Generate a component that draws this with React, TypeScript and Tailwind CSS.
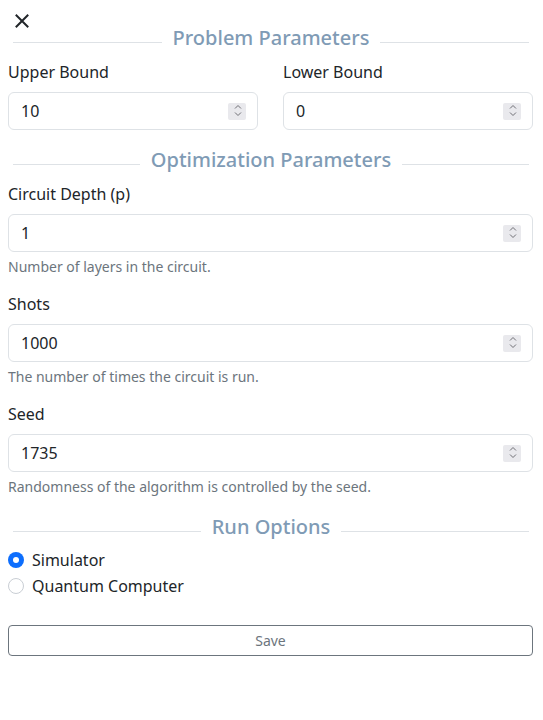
import React from "react";

function SectionTitle({ title, className = "" }: { title: string; className?: string }) {
  return (
    <div className={`flex items-center gap-[11px] pl-[5px] pr-[4px] ${className}`}>
      <div className="h-px flex-1 bg-[#dee2e6] mt-[8px]" />
      <h5 className="text-[20px] leading-[30px] font-medium text-[#809bb5]">{title}</h5>
      <div className="h-px flex-1 bg-[#dee2e6] mt-[8px]" />
    </div>
  );
}

function Spinner() {
  return (
    <span className="flex h-[17px] w-[18px] items-center justify-center bg-[#e9e9ed] rounded-[2px]">
      <svg width="18" height="17" viewBox="0 0 18 17" fill="none" stroke="#6f6f75" strokeWidth="1">
        <path d="M7 5.5 L10 2.5 L13 5.5" />
        <path d="M7 9.5 L10 12.5 L13 9.5" />
      </svg>
    </span>
  );
}

function NumberField({ value }: { value: string }) {
  return (
    <div className="flex h-[38px] items-center rounded-[6px] border border-[#dee2e6] bg-white pl-[12px] pr-[11px]">
      <input
        type="text"
        defaultValue={value}
        className="min-w-0 flex-1 bg-transparent text-[16px] leading-6 text-[#212529] outline-none"
      />
      <Spinner />
    </div>
  );
}

function Field({ label, value, help }: { label: string; value: string; help?: string }) {
  return (
    <div>
      <label className="mb-2 block text-[16px] leading-6 text-[#212529]">{label}</label>
      <NumberField value={value} />
      {help && <div className="mt-1 text-[14px] leading-[21px] text-[#6c757d]">{help}</div>}
    </div>
  );
}

function Radio({ label, checked }: { label: string; checked?: boolean }) {
  return (
    <label className="flex items-center gap-2 text-[16px] leading-6 text-[#212529]">
      {checked ? (
        <span className="flex h-4 w-4 items-center justify-center rounded-full bg-[#0d6efd]">
          <span className="h-[6px] w-[6px] rounded-full bg-white" />
        </span>
      ) : (
        <span className="h-4 w-4 rounded-full border border-[#c9ced4] bg-white" />
      )}
      {label}
    </label>
  );
}

export default function App() {
  return (
    <div className="min-h-[720px] bg-white pl-2 pr-[10px] font-['Noto_Sans',sans-serif]">
      <div className="h-[23px] pl-[7px] pt-[14px]">
        <button className="block">
          <svg width="14" height="14" viewBox="0 0 14 14" stroke="#212529" strokeWidth="2" strokeLinecap="square">
            <path d="M1.5 1.5 L12.5 12.5 M12.5 1.5 L1.5 12.5" />
          </svg>
        </button>
      </div>

      <SectionTitle title="Problem Parameters" className="mb-[7px]" />
      <div className="grid grid-cols-2 gap-x-[25px]">
        <Field label="Upper Bound" value="10" />
        <Field label="Lower Bound" value="0" />
      </div>

      <SectionTitle title="Optimization Parameters" className="mt-[15px] mb-[7px]" />
      <div className="flex flex-col gap-[15px]">
        <Field label="Circuit Depth (p)" value="1" help="Number of layers in the circuit." />
        <Field label="Shots" value="1000" help="The number of times the circuit is run." />
        <Field label="Seed" value="1735" help="Randomness of the algorithm is controlled by the seed." />
      </div>

      <SectionTitle title="Run Options" className="mt-[15px] mb-[6px]" />
      <div className="flex flex-col gap-[2px]">
        <Radio label="Simulator" checked />
        <Radio label="Quantum Computer" />
      </div>

      <button className="mt-[27px] block h-[31px] w-full rounded-[4px] border border-[#6c757d] text-[14px] leading-[21px] text-[#6c757d]">
        Save
      </button>
    </div>
  );
}
